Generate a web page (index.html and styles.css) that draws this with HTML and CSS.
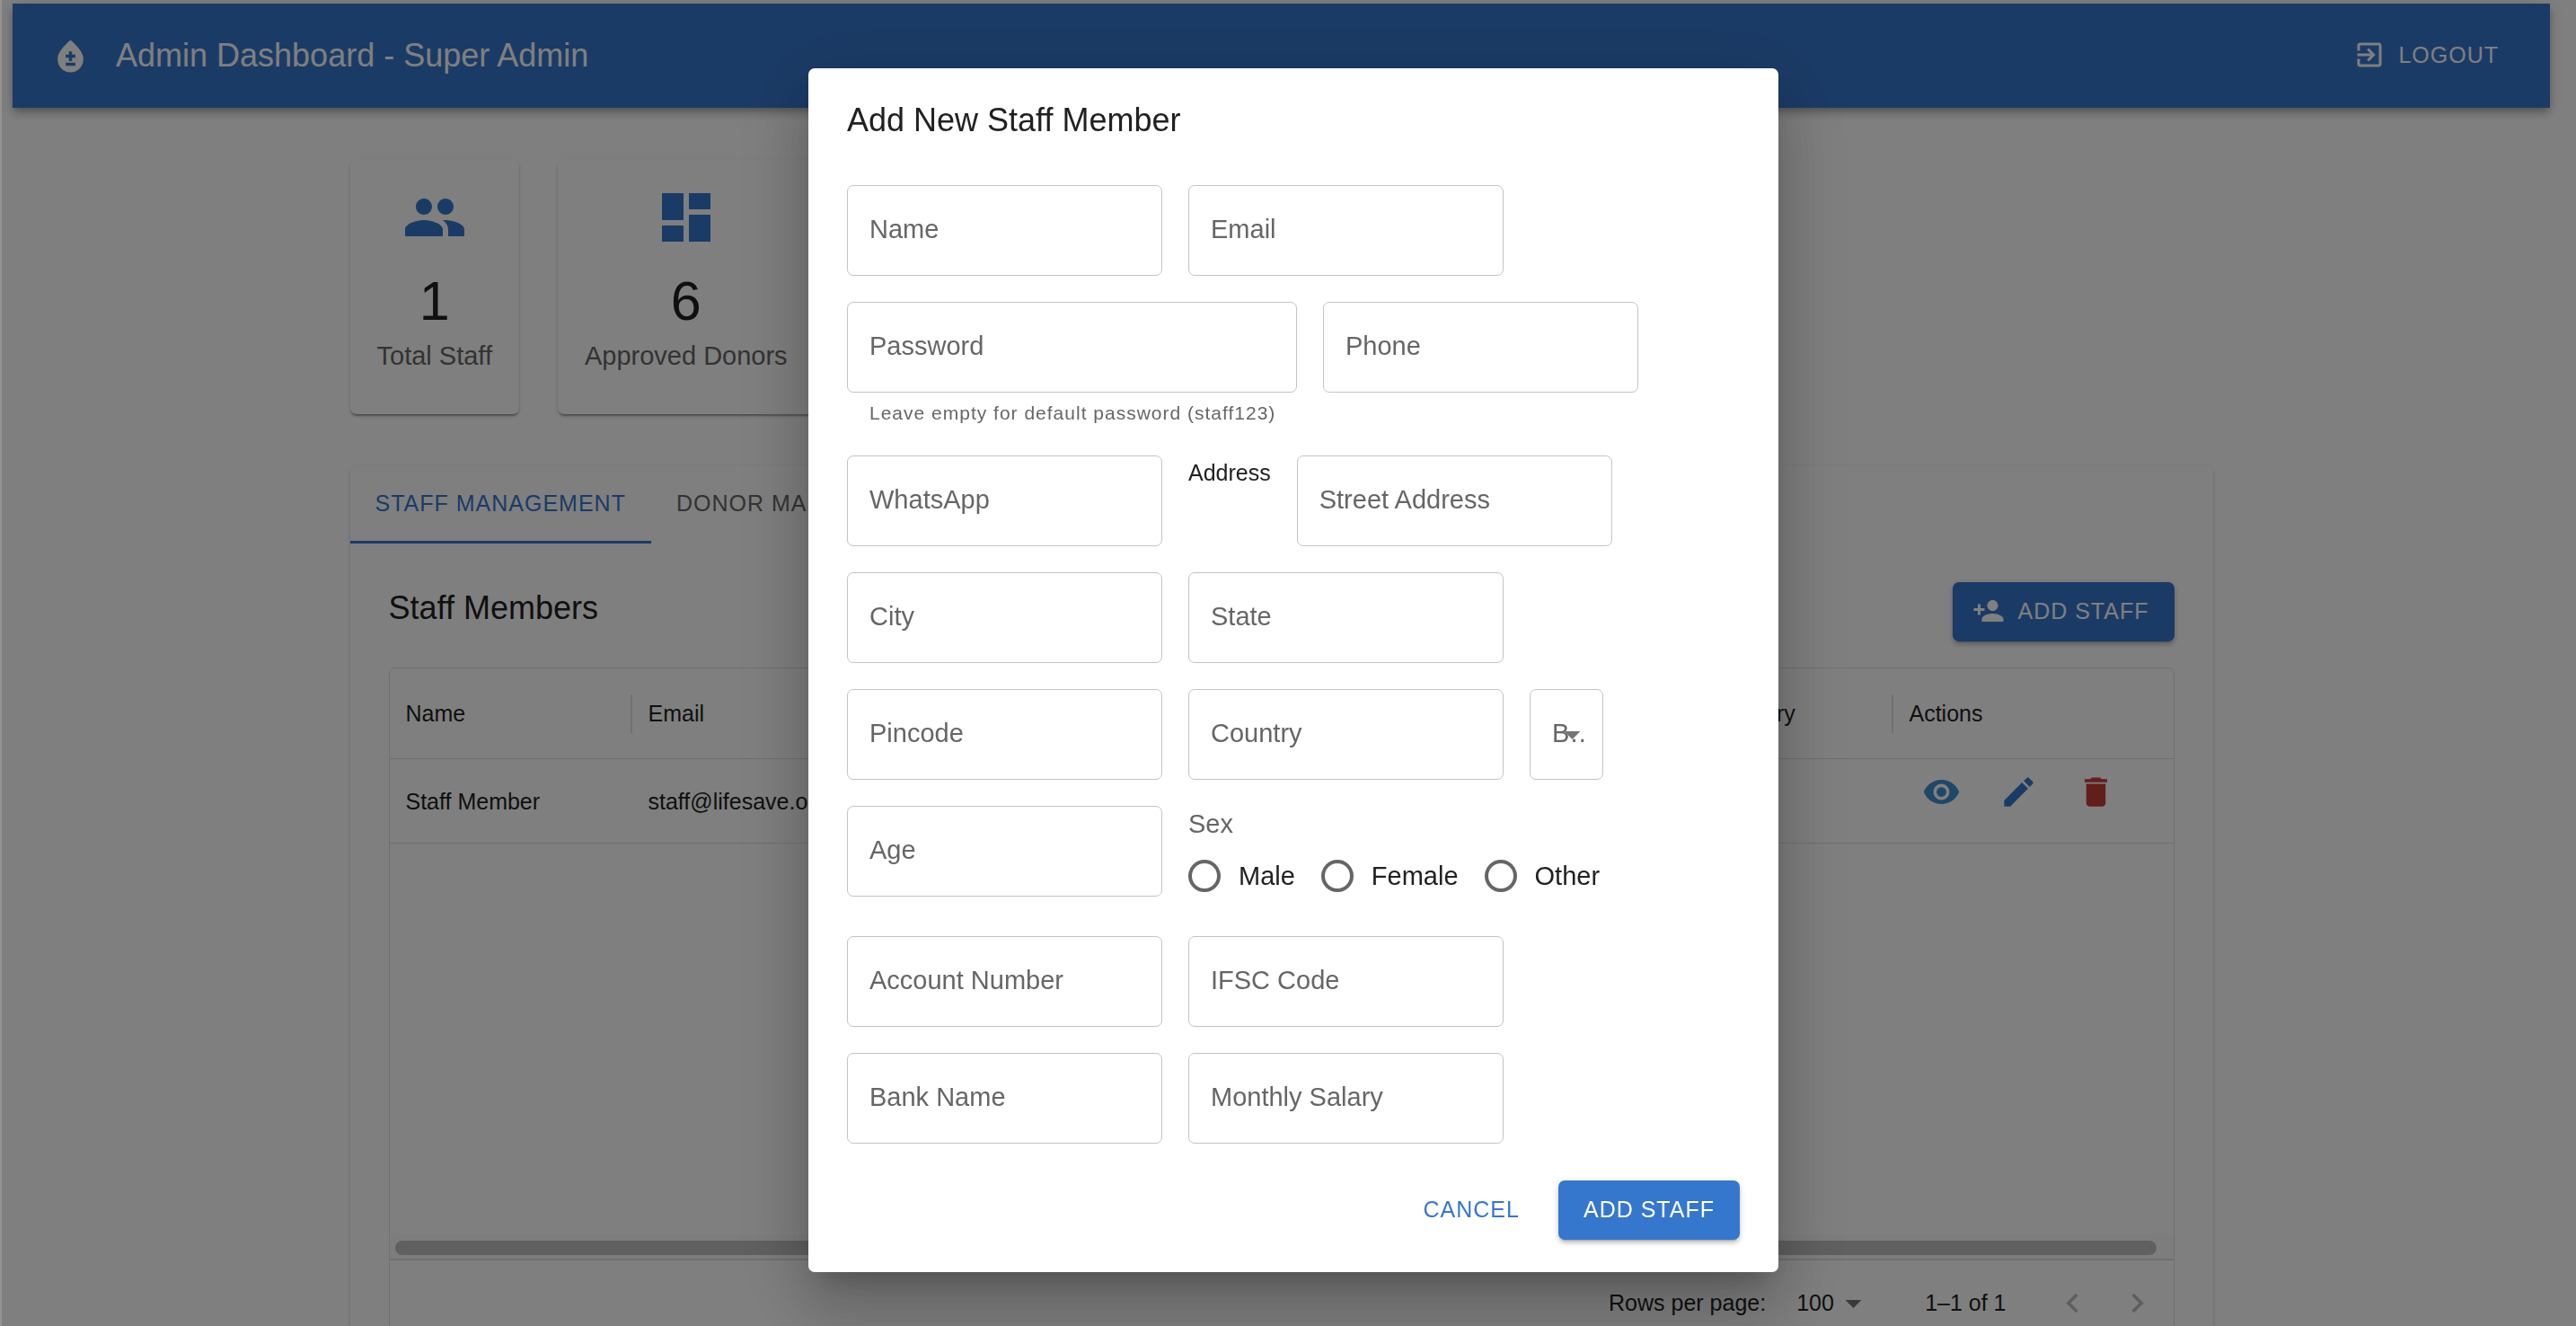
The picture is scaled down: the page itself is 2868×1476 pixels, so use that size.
FILE: index.html
```html
<!DOCTYPE html>
<html lang="en">
<head>
<meta charset="utf-8">
<title>Admin Dashboard</title>
<link rel="stylesheet" href="styles.css">
</head>
<body>
<header class="appbar">
  <svg class="icon" viewBox="0 0 24 24" aria-hidden="true"><path d="M12 2c-5.33 4.55-8 8.48-8 11.8 0 4.98 3.8 8.2 8 8.2s8-3.22 8-8.2c0-3.32-2.67-7.25-8-11.8zm3 16H9v-2h6v2zm0-5h-2v2h-2v-2H9v-2h2V9h2v2h2v2z"/></svg>
  <h1 class="title">Admin Dashboard - Super Admin</h1>
  <button class="btn logout" type="button">
    <svg class="icon-sm" viewBox="0 0 24 24" aria-hidden="true"><path d="M10.09 15.59 11.5 17l5-5-5-5-1.41 1.41L12.67 11H3v2h9.67l-2.58 2.59zM19 3H5c-1.11 0-2 .9-2 2v4h2V5h14v14H5v-4H3v4c0 1.1.89 2 2 2h14c1.1 0 2-.9 2-2V5c0-1.1-.9-2-2-2z"/></svg>
    LOGOUT
  </button>
</header>

<main class="container">
  <section class="stats">
    <article class="stat">
      <svg class="icon-lg" viewBox="0 0 24 24" aria-hidden="true"><path d="M16 11c1.66 0 2.99-1.34 2.99-3S17.66 5 16 5s-3 1.34-3 3 1.34 3 3 3zm-8 0c1.66 0 2.99-1.34 2.99-3S9.66 5 8 5 5 6.34 5 8s1.34 3 3 3zm0 2c-2.33 0-7 1.17-7 3.5V19h14v-2.500c0-2.330-4.670-3.500-7-3.500zm8 0c-.29 0-.62.020-.97.050 1.160.840 1.970 1.970 1.970 3.450V19h6v-2.500c0-2.330-4.670-3.500-7-3.500z"/></svg>
      <strong class="stat-value">1</strong>
      <span class="stat-label">Total Staff</span>
    </article>
    <article class="stat">
      <svg class="icon-lg" viewBox="0 0 24 24" aria-hidden="true"><path d="M3 13h8V3H3v10zm0 8h8v-6H3v6zm10 0h8V11h-8v10zm0-18v6h8V3h-8z"/></svg>
      <strong class="stat-value">6</strong>
      <span class="stat-label">Approved Donors</span>
    </article>
  </section>

  <section class="panel">
    <div class="tabs" role="tablist">
      <button class="tab tab-active" type="button" role="tab" aria-selected="true">STAFF MANAGEMENT</button>
      <button class="tab" type="button" role="tab" aria-selected="false">DONOR MANAGEMENT</button>
    </div>
    <div class="panel-body">
      <div class="panel-head">
        <h2 class="title">Staff Members</h2>
        <button class="btn btn-filled btn-icon" type="button">
          <svg class="icon-sm" viewBox="0 0 24 24" aria-hidden="true"><path d="M15 12c2.210 0 4-1.790 4-4s-1.790-4-4-4-4 1.790-4 4 1.790 4 4 4zm-9-2V7H4v3H1v2h3v3h2v-3h3v-2H6zm9 4c-2.670 0-8 1.340-8 4v2h16v-2c0-2.660-5.330-4-8-4z"/></svg>
          ADD STAFF
        </button>
      </div>
      <div class="grid">
        <table class="table">
          <colgroup><col class="col-name"><col class="col-email"><col><col class="col-salary"><col class="col-actions"></colgroup>
          <thead>
            <tr><th><span>Name</span></th><th><span>Email</span></th><th><span>Phone</span></th><th><span>Monthly Salary</span></th><th><span>Actions</span></th></tr>
          </thead>
          <tbody>
            <tr>
              <td>Staff Member</td><td>staff@lifesave.org</td><td></td><td></td>
              <td class="cell-actions">
                <div class="actions">
                  <button class="icon-btn view" type="button" aria-label="View"><svg class="icon" viewBox="0 0 24 24" aria-hidden="true"><path d="M12 4.500C7 4.500 2.730 7.610 1 12c1.730 4.390 6 7.500 11 7.500s9.270-3.110 11-7.500c-1.730-4.390-6-7.500-11-7.500zM12 17c-2.760 0-5-2.240-5-5s2.240-5 5-5 5 2.240 5 5-2.240 5-5 5zm0-8c-1.660 0-3 1.340-3 3s1.340 3 3 3 3-1.340 3-3-1.340-3-3-3z"/></svg></button>
                  <button class="icon-btn edit" type="button" aria-label="Edit"><svg class="icon" viewBox="0 0 24 24" aria-hidden="true"><path d="M3 17.250V21h3.750L17.810 9.940l-3.750-3.750L3 17.250zM20.710 7.040c.39-.39.39-1.020 0-1.410l-2.340-2.340c-.39-.39-1.020-.39-1.410 0l-1.830 1.830 3.750 3.750 1.830-1.830z"/></svg></button>
                  <button class="icon-btn delete" type="button" aria-label="Delete"><svg class="icon" viewBox="0 0 24 24" aria-hidden="true"><path d="M6 19c0 1.100.9 2 2 2h8c1.100 0 2-.9 2-2V7H6v12zM19 4h-3.500l-1-1h-5l-1 1H5v2h14V4z"/></svg></button>
                </div>
              </td>
            </tr>
          </tbody>
        </table>
        <div class="grid-space"></div>
        <div class="scroll-track"><div class="scroll-thumb"></div></div>
        <footer class="pager">
          <label for="rows">Rows per page:</label>
          <span class="rows-wrap">
            <select id="rows" class="rows"><option>100</option></select>
            <svg class="icon" viewBox="0 0 24 24" aria-hidden="true"><path d="m7 10 5 5 5-5z"/></svg>
          </span>
          <span class="range">1–1 of 1</span>
          <button class="icon-btn page" type="button" aria-label="Previous page" disabled><svg class="icon" viewBox="0 0 24 24" aria-hidden="true"><path d="M15.410 7.410 14 6l-6 6 6 6 1.410-1.410L10.830 12z"/></svg></button>
          <button class="icon-btn page" type="button" aria-label="Next page" disabled><svg class="icon" viewBox="0 0 24 24" aria-hidden="true"><path d="M10 6 8.590 7.410 13.170 12l-4.580 4.590L10 18l6-6z"/></svg></button>
        </footer>
      </div>
    </div>
  </section>
</main>

<div class="backdrop">
  <form class="dialog" role="dialog" aria-labelledby="dialog-title">
    <h2 class="title dialog-title" id="dialog-title">Add New Staff Member</h2>
    <div class="fields">
      <div class="row">
        <div class="field"><input id="name" type="text"><label for="name">Name</label></div>
        <div class="field"><input id="email" type="email"><label for="email">Email</label></div>
      </div>
      <div class="row">
        <div class="password">
          <div class="field field-wide"><input id="password" type="password" aria-describedby="password-help"><label for="password">Password</label></div>
          <p class="help" id="password-help">Leave empty for default password (staff123)</p>
        </div>
        <div class="field"><input id="phone" type="tel"><label for="phone">Phone</label></div>
      </div>
      <div class="row">
        <div class="field"><input id="whatsapp" type="tel"><label for="whatsapp">WhatsApp</label></div>
        <h3 class="group-title">Address</h3>
        <div class="field"><input id="street" type="text"><label for="street">Street Address</label></div>
      </div>
      <div class="row">
        <div class="field"><input id="city" type="text"><label for="city">City</label></div>
        <div class="field"><input id="state" type="text"><label for="state">State</label></div>
      </div>
      <div class="row">
        <div class="field"><input id="pincode" type="text"><label for="pincode">Pincode</label></div>
        <div class="field"><input id="country" type="text"><label for="country">Country</label></div>
        <div class="field field-narrow">
          <select id="blood"><option></option></select>
          <label for="blood">Blood Group</label>
          <svg class="icon arrow" viewBox="0 0 24 24" aria-hidden="true"><path d="m7 10 5 5 5-5z"/></svg>
        </div>
      </div>
      <div class="row">
        <div class="field"><input id="age" type="text"><label for="age">Age</label></div>
        <fieldset class="sex">
          <legend>Sex</legend>
          <div class="radios">
            <label><input type="radio" name="sex">Male</label>
            <label><input type="radio" name="sex">Female</label>
            <label><input type="radio" name="sex">Other</label>
          </div>
        </fieldset>
      </div>
      <div class="row">
        <div class="field"><input id="account" type="text"><label for="account">Account Number</label></div>
        <div class="field"><input id="ifsc" type="text"><label for="ifsc">IFSC Code</label></div>
      </div>
      <div class="row">
        <div class="field"><input id="bank" type="text"><label for="bank">Bank Name</label></div>
        <div class="field"><input id="salary" type="text"><label for="salary">Monthly Salary</label></div>
      </div>
    </div>
    <div class="dialog-actions">
      <button class="btn btn-text" type="button">CANCEL</button>
      <button class="btn btn-filled" type="button">ADD STAFF</button>
    </div>
  </form>
</div>
</body>
</html>
```

FILE: styles.css
```css
:root {
  --blue: #3677ce;
  --text: #212121;
  --muted: #666;
  --line: #e0e0e0;
  --outline: #c4c4c4;
}

* {
  box-sizing: border-box;
  margin: 0;
}

html {
  height: 100%;
  overflow: hidden;
}

body {
  height: 100%;
  overflow: hidden;
  padding: 4px 29px 0 14px;
  background: #fff;
  color: var(--text);
  font: 29px/43px "Liberation Sans", Arial, sans-serif;
}

button, input, select {
  font: inherit;
  color: inherit;
}

button {
  border: 0;
  background: none;
}

svg {
  display: block;
  flex: none;
  fill: currentColor;
}

.icon { width: 43px; height: 43px; }
.icon-sm { width: 36px; height: 36px; }
.icon-lg { width: 72px; height: 72px; }

.title {
  font-size: 36px;
  line-height: 58px;
  font-weight: 400;
}

/* App bar */
.appbar {
  display: flex;
  align-items: center;
  gap: 29px;
  height: 116px;
  padding: 0 43px;
  background: var(--blue);
  color: #fff;
  box-shadow: 0 4px 7px -2px rgba(0, 0, 0, .2), 0 7px 9px rgba(0, 0, 0, .14), 0 2px 18px rgba(0, 0, 0, .12);
}

.btn {
  display: flex;
  align-items: center;
  justify-content: center;
  gap: 14px;
  height: 66px;
  padding: 0 28px 2px;
  border-radius: 7px;
  font-size: 25px;
  line-height: 44px;
  letter-spacing: 1px;
}

.logout {
  margin-left: auto;
  padding: 0 14px 2px;
}

.btn-filled {
  background: var(--blue);
  color: #fff;
  box-shadow: 0 5px 2px -4px rgba(0, 0, 0, .2), 0 4px 4px rgba(0, 0, 0, .14), 0 2px 9px rgba(0, 0, 0, .12);
}

.btn-icon { padding-left: 22px; }

.btn-text {
  padding: 0 14px 2px;
  color: var(--blue);
}

/* Page content */
.container {
  max-width: 2160px;
  margin: 0 auto;
  padding: 57px 43px;
}

.stats {
  display: flex;
  gap: 43px;
  margin-bottom: 57px;
}

.stat {
  display: flex;
  flex-direction: column;
  align-items: center;
  padding: 29px 30px 43px;
  border-radius: 7px;
  box-shadow: 0 4px 2px -2px rgba(0, 0, 0, .2), 0 2px 2px rgba(0, 0, 0, .14), 0 2px 5px rgba(0, 0, 0, .12);
}

.stat svg { color: var(--blue); }

.stat-value {
  margin: 19px 0 2px;
  font-size: 61px;
  line-height: 76px;
  font-weight: 400;
}

.stat-label { color: var(--muted); }

.panel {
  border-radius: 7px;
  box-shadow: 0 4px 2px -2px rgba(0, 0, 0, .2), 0 2px 2px rgba(0, 0, 0, .14), 0 2px 5px rgba(0, 0, 0, .12);
}

.tabs { display: flex; }

.tab {
  height: 87px;
  padding: 0 28px;
  border-bottom: 3px solid transparent;
  color: var(--muted);
  font-size: 25px;
  letter-spacing: 1px;
}

.tab-active {
  border-color: var(--blue);
  color: var(--blue);
}

.panel-body { padding: 43px; }

.panel-head {
  display: flex;
  align-items: flex-start;
  justify-content: space-between;
  margin-bottom: 29px;
}

/* Data grid */
.grid {
  border: 1px solid var(--line);
  border-radius: 7px;
  font-size: 25px;
  line-height: 36px;
}

.table {
  width: 100%;
  table-layout: fixed;
  border-collapse: separate;
  border-spacing: 0;
}

.col-name { width: 270px; }
.col-email { width: 405px; }
.col-salary { width: 292px; }
.col-actions { width: 312px; }

.table th, .table td {
  padding: 0 18px;
  border-bottom: 1px solid var(--line);
  text-align: left;
  font-weight: 400;
}

.table th {
  height: 101px;
  padding-right: 0;
}

.table th span {
  display: block;
  border-right: 2px solid var(--line);
  line-height: 43px;
}

.table th:last-child span { border-right: 0; }

.table td { height: 94px; }

.table .cell-actions {
  padding: 0 18px;
  vertical-align: top;
}

.actions {
  display: flex;
  gap: 14px;
}

.icon-btn {
  display: flex;
  align-items: center;
  justify-content: center;
  width: 72px;
  height: 72px;
  padding: 0;
}

.view { color: #3e8fd0; }
.edit { color: var(--blue); }
.delete { color: #c43c35; }

.grid-space { height: 436px; }

.scroll-track {
  height: 28px;
  padding: 6px 19px 6px 6px;
  background: #fafafa;
  border-bottom: 2px solid var(--line);
}

.scroll-thumb {
  height: 16px;
  border-radius: 8px;
  background: #c1c1c1;
}

.pager {
  display: flex;
  align-items: center;
  justify-content: flex-end;
  height: 94px;
  padding-right: 4px;
}

.rows-wrap {
  display: flex;
  align-items: center;
  margin: 0 58px 0 34px;
}

.rows-wrap svg { color: #757575; }

.rows {
  padding: 0;
  border: 0;
  background: none;
  appearance: none;
}

.range { margin-right: 38px; }

.page { color: #bdbdbd; }

/* Dialog */
.backdrop {
  position: fixed;
  inset: 0;
  display: flex;
  align-items: center;
  justify-content: center;
  padding: 16px 0 0 10px;
  border-left: 2px solid rgba(0, 0, 0, .42);
  background: rgba(0, 0, 0, .5);
  background-clip: padding-box;
}

.dialog {
  width: 1080px;
  padding: 29px 43px 36px;
  border-radius: 7px;
  background: #fff;
  box-shadow: 0 20px 27px -13px rgba(0, 0, 0, .2), 0 43px 68px 5px rgba(0, 0, 0, .14), 0 16px 83px 14px rgba(0, 0, 0, .12);
}

.fields {
  display: grid;
  gap: 29px;
  margin: 43px 0 41px;
}

.row {
  display: flex;
  align-items: flex-start;
  gap: 29px;
}

/* The label is stacked on its control in one grid cell */
.field {
  display: grid;
  width: 351px;
}

.field > * { grid-area: 1 / 1; }

.field input, .field select {
  width: 100%;
  height: 101px;
  padding: 0 25px;
  border: 1px solid var(--outline);
  border-radius: 7px;
  background: none;
  appearance: none;
}

.field label {
  align-self: center;
  overflow: hidden;
  padding: 0 0 4px 25px;
  color: var(--muted);
  line-height: 42px;
  text-overflow: ellipsis;
  white-space: nowrap;
  pointer-events: none;
}

.field-wide { width: 501px; }
.field-narrow { width: 82px; }
.field-narrow label { margin-right: 18px; }

.arrow {
  align-self: center;
  justify-self: end;
  margin-right: 13px;
  color: #757575;
  pointer-events: none;
}

.help {
  padding: 5px 0 0 25px;
  color: var(--muted);
  font-size: 21px;
  line-height: 36px;
  letter-spacing: 1px;
}

.group-title {
  font-size: 25px;
  line-height: 38px;
  font-weight: 400;
}

.sex {
  min-width: 0;
  padding: 0;
  border: 0;
}

.sex legend {
  padding: 0;
  color: var(--muted);
  line-height: 40px;
}

.radios {
  display: flex;
  gap: 29px;
}

.radios label {
  display: flex;
  align-items: center;
  gap: 20px;
  height: 76px;
}

.radios input {
  width: 36px;
  height: 36px;
  margin: 0;
  border: 4px solid var(--muted);
  border-radius: 50%;
  appearance: none;
}

.dialog-actions {
  display: flex;
  justify-content: flex-end;
  gap: 29px;
}
```
